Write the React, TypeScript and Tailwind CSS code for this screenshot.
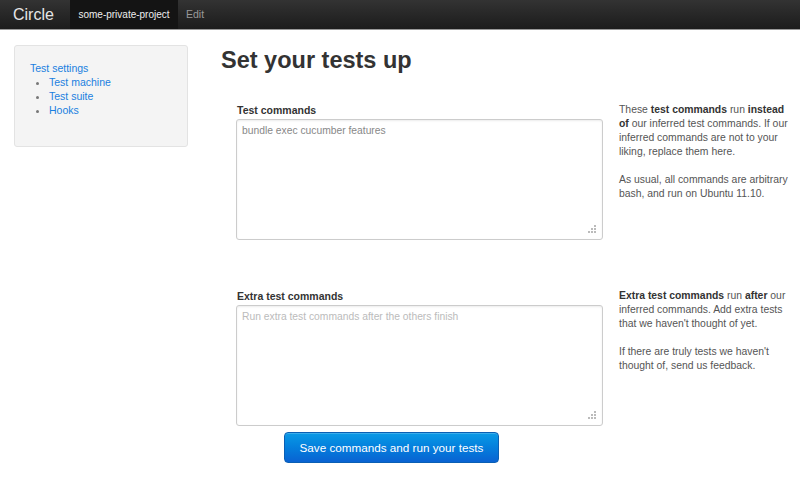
import React from 'react'

const Grip = () => (
  <svg className="absolute right-[6px] bottom-[6px]" width="9" height="9" viewBox="0 0 9 9">
    <rect x="6" y="0" width="2" height="2" fill="#bbb" />
    <rect x="3" y="3" width="2" height="2" fill="#bbb" />
    <rect x="6" y="3" width="2" height="2" fill="#bbb" />
    <rect x="0" y="6" width="2" height="2" fill="#bbb" />
    <rect x="3" y="6" width="2" height="2" fill="#bbb" />
    <rect x="6" y="6" width="2" height="2" fill="#bbb" />
  </svg>
)

interface CommandRowProps {
  label: string
  placeholder: string
  valueLike?: boolean
  children: React.ReactNode
}

const CommandRow = ({ label, placeholder, valueLike, children }: CommandRowProps) => (
  <div className="flex">
    <div className="w-[367px] ml-[15px]">
      <label className="block font-bold text-[10.5px] leading-[14px] text-[#333] ml-[1px] mb-[2px]">{label}</label>
      <div className="relative">
        <textarea
          className={`block w-[367px] h-[121px] resize-none border border-[#ccc] rounded-[3px] px-[5px] pt-[4px] text-[10.3px] leading-[14px] outline-none shadow-[inset_0_1px_2px_rgba(0,0,0,0.08)] ${valueLike ? 'placeholder:text-[#888]' : 'placeholder:text-[#bbb]'}`}
          placeholder={placeholder}
        />
        <Grip />
      </div>
    </div>
    <div className="ml-[16px] w-[174px] text-[10.4px] leading-[14px] text-[#555]">{children}</div>
  </div>
)

const App = () => {
  return (
    <div className="w-[800px] h-[478px] bg-white font-['Liberation_Sans',Arial,sans-serif] text-[#333] overflow-hidden">
      <div className="h-[30px] flex items-stretch bg-gradient-to-b from-[#333] to-[#1c1c1c] border-b border-[#999]">
        <div className="w-[70px] pl-[13px] flex items-center text-[16px] text-[#e5e5e5]">Circle</div>
        <div className="w-[108px] flex items-center justify-center bg-[#141414] text-[10px] text-[#eee]">some-private-project</div>
        <div className="px-[8px] flex items-center text-[10.5px] text-[#999]">Edit</div>
      </div>

      <div className="flex">
        <div className="ml-[14px] mt-[15px] w-[174px] h-[102px] bg-[#f4f4f4] border border-[#e3e3e3] rounded-[3px] pl-[15px] pt-[15px] text-[10.5px] leading-[14px] text-[#1a7fe0]">
          <div>Test settings</div>
          <ul className="list-disc pl-[19px] marker:text-[#777]">
            <li>Test machine</li>
            <li>Test suite</li>
            <li>Hooks</li>
          </ul>
        </div>

        <div className="ml-[33px]">
          <h1 className="mt-[14px] text-[23.5px] leading-[32px] font-bold text-[#333]">Set your tests up</h1>

          <div className="mt-[27px]">
            <CommandRow label="Test commands" placeholder="bundle exec cucumber features" valueLike>
              <p>
                These <b className="text-[#333]">test commands</b> run <b className="text-[#333]">instead of</b> our inferred test commands. If our inferred commands are not to your liking, replace them here.
              </p>
              <p className="mt-[14px]">As usual, all commands are arbitrary bash, and run on Ubuntu 11.10.</p>
            </CommandRow>
          </div>

          <div className="mt-[49px]">
            <CommandRow label="Extra test commands" placeholder="Run extra test commands after the others finish">
              <p>
                <b className="text-[#333]">Extra test commands</b> run <b className="text-[#333]">after</b> our inferred commands. Add extra tests that we haven't thought of yet.
              </p>
              <p className="mt-[14px]">If there are truly tests we haven't thought of, send us feedback.</p>
            </CommandRow>
          </div>

          <button className="mt-[6px] ml-[63px] w-[215px] h-[31px] rounded-[4px] border border-[#0a5fb4] bg-gradient-to-b from-[#0b9ae6] to-[#0a62d2] text-white text-[11.7px] shadow-[inset_0_1px_0_rgba(255,255,255,0.2)]">
            Save commands and run your tests
          </button>
        </div>
      </div>
    </div>
  )
}

export default App
